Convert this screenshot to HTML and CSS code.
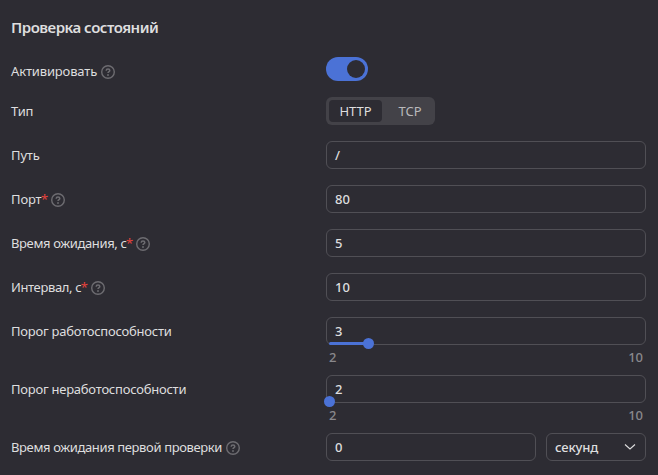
FILE: index.html
```html
<!DOCTYPE html>
<html lang="ru">
<head>
<meta charset="utf-8">
<title>Проверка состояний</title>
<link rel="stylesheet" href="styles.css">
</head>
<body>
<svg width="0" height="0" class="defs">
  <symbol id="help" viewBox="0 0 14 14">
    <circle cx="7" cy="7" r="6.3" fill="none" stroke="currentColor" stroke-width="1.4"/>
    <path d="M5.200 5.700C5.200 4.600 6 4.100 7 4.100s1.800.6 1.800 1.500C8.800 6.700 7 6.700 7 8.100" fill="none" stroke="currentColor" stroke-width="1.500"/>
    <circle cx="7" cy="10" r=".95" fill="currentColor"/>
  </symbol>
</svg>
<form class="form">
  <h2 class="title">Проверка состояний</h2>
  <div class="row row-switch">
    <div class="label"><span>Активировать</span><svg class="help"><use href="#help"/></svg></div>
    <div class="switch"><span class="knob"></span></div>
  </div>
  <div class="row">
    <div class="label"><span>Тип</span></div>
    <div class="segmented"><span class="option active">HTTP</span><span class="option">TCP</span></div>
  </div>
  <div class="row">
    <div class="label"><span>Путь</span></div>
    <div class="field">/</div>
  </div>
  <div class="row">
    <div class="label"><span>Порт</span><i class="required">*</i><svg class="help"><use href="#help"/></svg></div>
    <div class="field">80</div>
  </div>
  <div class="row">
    <div class="label tight"><span>Время ожидания, с</span><i class="required">*</i><svg class="help"><use href="#help"/></svg></div>
    <div class="field">5</div>
  </div>
  <div class="row">
    <div class="label tight"><span>Интервал, с</span><i class="required">*</i><svg class="help"><use href="#help"/></svg></div>
    <div class="field">10</div>
  </div>
  <div class="row row-slider">
    <div class="label snug"><span>Порог работоспособности</span></div>
    <div class="slider">
      <div class="field">3<span class="track track-one"></span></div>
      <div class="marks"><span>2</span><span>10</span></div>
    </div>
  </div>
  <div class="row row-slider">
    <div class="label snug"><span>Порог неработоспособности</span></div>
    <div class="slider">
      <div class="field">2<span class="track track-zero"></span></div>
      <div class="marks"><span>2</span><span>10</span></div>
    </div>
  </div>
  <div class="row">
    <div class="label tight"><span>Время ожидания первой проверки</span><svg class="help"><use href="#help"/></svg></div>
    <div class="pair">
      <div class="field">0</div>
      <div class="field select"><span>секунд</span><svg class="chevron" viewBox="0 0 12 8"><path d="M1 1.500l5 4.500 5-4.500"/></svg></div>
    </div>
  </div>
</form>
</body>
</html>
```
FILE: styles.css
```css
* { box-sizing: border-box; }
body {
  margin: 0;
  background: #2d2c33;
  color: #dededf;
  font: 450 13px/18px "Noto Sans", sans-serif;
}
.defs { display: block; }
.form { padding: 17px 12px 0 11px; }
.title { margin: 0; height: 40px; font-size: 15px; line-height: 20px; font-weight: 600; letter-spacing: -0.5px; }
.row { display: grid; grid-template-columns: 315px 320px; height: 28px; margin-bottom: 16px; }
.row-switch { height: 24px; }
.row-slider { height: 42px; }
.label { display: flex; align-items: center; height: 28px; white-space: nowrap; letter-spacing: -0.15px; }
.snug { letter-spacing: -0.24px; }
.tight { letter-spacing: -0.37px; }
.required { width: 5.500px; margin: 0 1px 0 -0.5px; color: #e5423c; font-style: normal; }
.help { width: 14px; height: 14px; margin: 2px 0 0 4px; color: #6d6c71; }
.tight .help { margin-left: 3.800px; }
.switch { width: 42px; height: 24px; padding: 3px; border-radius: 12px; background: #4b72d6; display: flex; justify-content: flex-end; }
.knob { width: 18px; height: 18px; border-radius: 50%; background: #2d2c33; }
.segmented { display: flex; width: 109px; height: 28px; padding: 3px; border-radius: 6px; background: #434248; }
.option { flex: 1 1 0; padding-left: 6px; line-height: 23px; text-align: center; border-radius: 4px; color: #b9b9bc; }
.active { flex: 0 0 53px; padding-left: 0; background: #2d2c33; color: #dededf; }
.field { position: relative; flex: 1; height: 28px; border: 1px solid #504f55; border-radius: 6px; padding: 0 8px; line-height: 27px; font-weight: 500; }
.marks { display: flex; justify-content: space-between; padding: 3px 3px 0 3px; color: #89888c; font-weight: 500; }
.track { position: absolute; left: 2px; bottom: -1px; height: 3px; border-radius: 2px; background: #4b72d6; }
.track::after { content: ""; position: absolute; right: -5px; top: -4px; width: 11px; height: 11px; border-radius: 50%; background: #4b72d6; }
.track-one { width: 40px; }
.track-zero { width: 1px; left: 2px; }
.pair { display: flex; gap: 10px; }
.select { flex: 0 0 100px; display: flex; align-items: center; justify-content: space-between; padding-right: 9px; letter-spacing: -0.15px; }
.chevron { width: 12px; height: 8px; fill: none; stroke: #dededf; stroke-width: 1.1; }
```
